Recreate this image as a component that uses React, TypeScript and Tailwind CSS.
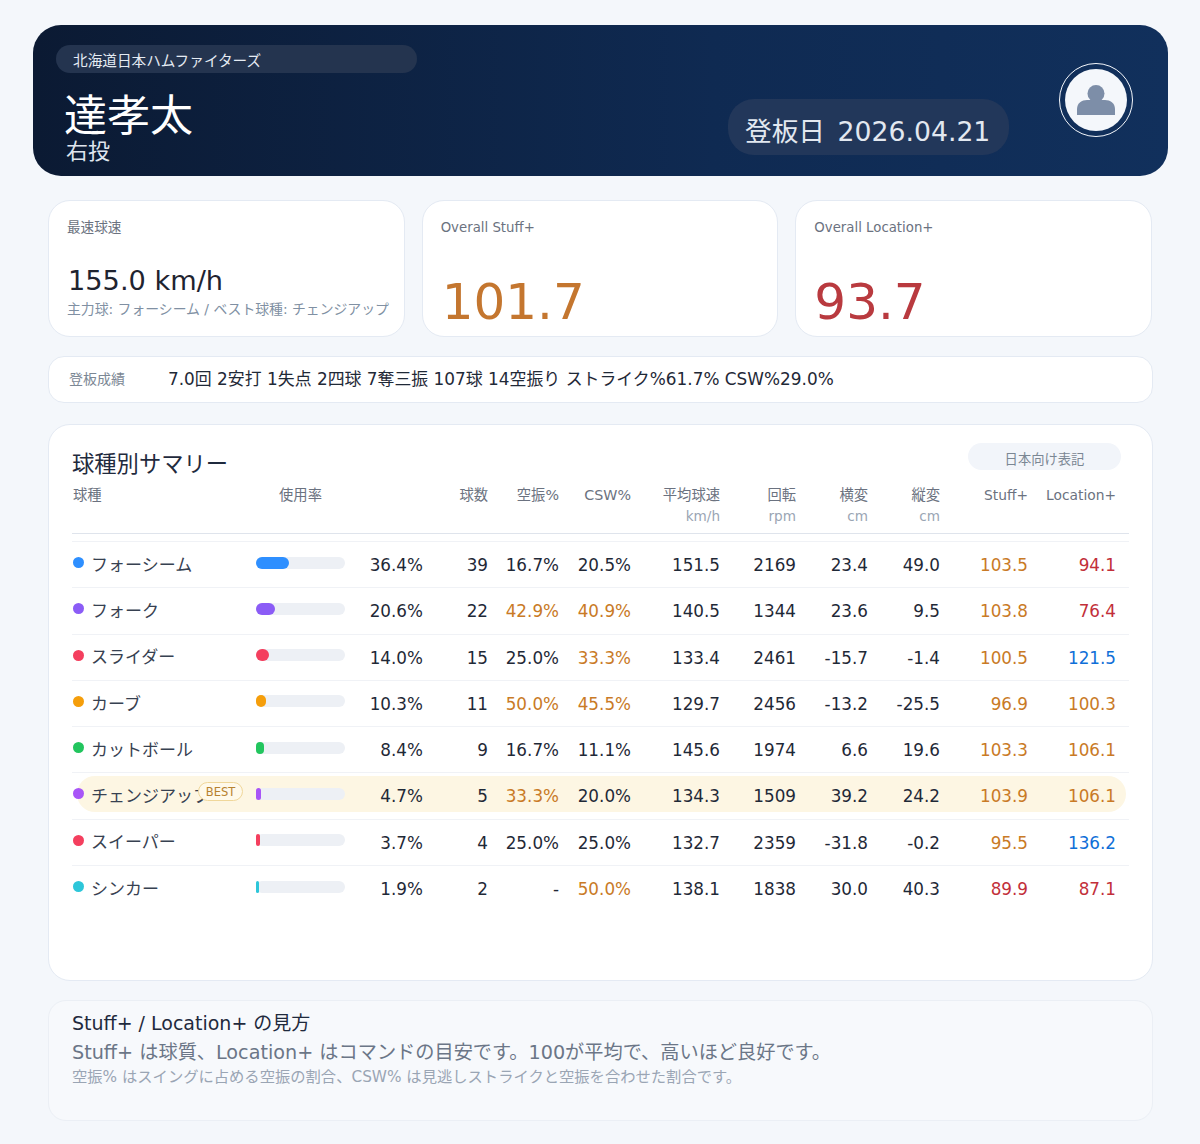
import React from 'react';

type Pitch = {
  name: string;
  color: string;
  usage: number;
  count: number;
  whiff: string;
  csw: string;
  velo: string;
  spin: string;
  h: string;
  v: string;
  stuff: string;
  location: string;
  best?: boolean;
};

const pitches: Pitch[] = [
  { name: 'フォーシーム', color: '#2e8fff', usage: 36.4, count: 39, whiff: '16.7%', csw: '20.5%', velo: '151.5', spin: '2169', h: '23.4', v: '49.0', stuff: '103.5', location: '94.1' },
  { name: 'フォーク', color: '#8b5cf6', usage: 20.6, count: 22, whiff: '42.9%', csw: '40.9%', velo: '140.5', spin: '1344', h: '23.6', v: '9.5', stuff: '103.8', location: '76.4' },
  { name: 'スライダー', color: '#f43f5e', usage: 14.0, count: 15, whiff: '25.0%', csw: '33.3%', velo: '133.4', spin: '2461', h: '-15.7', v: '-1.4', stuff: '100.5', location: '121.5' },
  { name: 'カーブ', color: '#f59e0b', usage: 10.3, count: 11, whiff: '50.0%', csw: '45.5%', velo: '129.7', spin: '2456', h: '-13.2', v: '-25.5', stuff: '96.9', location: '100.3' },
  { name: 'カットボール', color: '#22c55e', usage: 8.4, count: 9, whiff: '16.7%', csw: '11.1%', velo: '145.6', spin: '1974', h: '6.6', v: '19.6', stuff: '103.3', location: '106.1' },
  { name: 'チェンジアップ', color: '#a855f7', usage: 4.7, count: 5, whiff: '33.3%', csw: '20.0%', velo: '134.3', spin: '1509', h: '39.2', v: '24.2', stuff: '103.9', location: '106.1', best: true },
  { name: 'スイーパー', color: '#f43f5e', usage: 3.7, count: 4, whiff: '25.0%', csw: '25.0%', velo: '132.7', spin: '2359', h: '-31.8', v: '-0.2', stuff: '95.5', location: '136.2' },
  { name: 'シンカー', color: '#2dc6d9', usage: 1.9, count: 2, whiff: '-', csw: '50.0%', velo: '138.1', spin: '1838', h: '30.0', v: '40.3', stuff: '89.9', location: '87.1' },
];

const rateColor = (value: string) => {
  const n = parseFloat(value);
  return n >= 30 ? 'text-[#c97a26]' : 'text-[#1f2937]';
};

const plusColor = (value: string) => {
  const n = parseFloat(value);
  if (n >= 110) return 'text-[#0f6fd8]';
  if (n >= 95) return 'text-[#c97a26]';
  return 'text-[#c22f3a]';
};

const rowGrid = 'grid grid-cols-[184px_89px_78px_65px_71px_72px_89px_76px_72px_72px_88px_88px] pr-[13px]';

function HeadCell({ label, unit, small }: { label: string; unit?: string; small?: boolean }) {
  return (
    <div className="text-right">
      <div className={`h-[21px] leading-[21px] ${small ? 'text-[13.8px]' : 'text-[14.3px]'}`}>{label}</div>
      {unit && <div className="text-[#9aa5b4] leading-[21px]">{unit}</div>}
    </div>
  );
}

export default function App() {
  return (
    <div className="h-[1144px] bg-[#f4f7fb] pt-[25px] px-[32px] font-['DejaVu_Sans','Noto_Sans_CJK_JP',sans-serif]">
      {/* ヘッダー */}
      <div className="ml-px flex h-[151px] rounded-[28px] bg-gradient-to-r from-[#0b1a33] via-[#0f2a52] via-60% to-[#11305c] pl-[23px] pt-[20px]">
        <div className="w-[361px] shrink-0">
          <div className="h-[28px] rounded-full bg-[#24344f] pl-[17px] text-[14.65px] leading-[32px] text-[#e5ebf3]">北海道日本ハムファイターズ</div>
          <div className="ml-[8px] mt-[18px] text-[43px] leading-[50px] text-white">達孝太</div>
          <div className="ml-[10px] mt-[-2px] text-[22px] leading-[26px] text-[#dfe5ee]">右投</div>
        </div>
        <div className="ml-[311px] mt-[54px] h-[56px] w-[281px] shrink-0 rounded-[26px] bg-[#22375a] pl-[17px] pt-[15px] text-[26.7px] leading-[36px] text-[#e2e8f0] [word-spacing:4px]">登板日 2026.04.21</div>
        <div className="ml-[50px] mt-[18px] flex h-[74px] w-[74px] shrink-0 items-center justify-center rounded-full border-[1.5px] border-[#f4f7fb]">
          <div className="flex h-[62px] w-[62px] items-center justify-center rounded-full bg-[#f4f7fb]">
            <svg width="38" height="30" viewBox="0 0 38 30" fill="#7d8ea8">
              <circle cx="19" cy="8.5" r="8.5" />
              <path d="M0 30V24C0 18 5 15 10 15H28C33 15 38 18 38 24V30Z" />
            </svg>
          </div>
        </div>
      </div>

      <div className="ml-[16px] mr-[15px]">
        {/* 指標カード */}
        <div className="mr-px mt-[24px] grid h-[137px] grid-cols-3 gap-[17px]">
          <div className="rounded-[22px] border border-[#e4eaf3] bg-white pl-[18px] pt-[17px]">
            <div className="text-[13.6px] leading-[18px] text-[#6b7280]">最速球速</div>
            <div className="ml-px mt-[27px] text-[27.2px] leading-[36px] text-[#1f2430]">155.0 km/h</div>
            <div className="whitespace-nowrap text-[13.85px] leading-[20px] text-[#8090a3]">主力球: フォーシーム / ベスト球種: チェンジアップ</div>
          </div>
          <div className="rounded-[22px] border border-[#e4eaf3] bg-white pl-[18px] pt-[18px]">
            <div className="text-[13.3px] leading-[18px] text-[#6b7280]">Overall Stuff+</div>
            <div className="ml-[1px] mt-[31px] text-[50px] leading-[68px] text-[#c4762f]">101.7</div>
          </div>
          <div className="rounded-[22px] border border-[#e4eaf3] bg-white pl-[18px] pt-[18px]">
            <div className="text-[13.3px] leading-[18px] text-[#6b7280]">Overall Location+</div>
            <div className="mt-[31px] text-[50px] leading-[68px] text-[#b93a3f]">93.7</div>
          </div>
        </div>

        {/* 登板成績 */}
        <div className="mt-[19px] flex h-[47px] items-center rounded-[16px] border border-[#e4eaf3] bg-white pl-[20px]">
          <div className="w-[99px] text-[14px] text-[#7b8794]">登板成績</div>
          <div className="text-[16.9px] text-[#1f2937]">7.0回 2安打 1失点 2四球 7奪三振 107球 14空振り ストライク%61.7% CSW%29.0%</div>
        </div>

        {/* 球種別サマリー */}
        <div className="mt-[21px] h-[557px] rounded-[22px] border border-[#e4eaf3] bg-white pl-[23px] pr-[23px] pt-[18px]">
          <div className="flex justify-between">
            <div className="mt-[5px] text-[22.3px] leading-[32px] text-[#1f2a3d]">球種別サマリー</div>
            <div className="mr-[8px] h-[27px] w-[153px] rounded-full bg-[#f2f5fa] text-center text-[13.3px] leading-[33px] text-[#7b8794]">日本向け表記</div>
          </div>
          <div className={`${rowGrid} mt-[5px] h-[49px] border-b border-[#dfe4ec] text-[13.6px] text-[#6b7280]`}>
            <div className="pl-px text-[14.3px] leading-[21px]">球種</div>
            <div className="text-center text-[14.3px] leading-[21px]">使用率</div>
            <div />
            <HeadCell label="球数" />
            <HeadCell label="空振%" />
            <HeadCell label="CSW%" />
            <HeadCell label="平均球速" unit="km/h" />
            <HeadCell label="回転" unit="rpm" />
            <HeadCell label="横変" unit="cm" />
            <HeadCell label="縦変" unit="cm" />
            <HeadCell label="Stuff+" small />
            <HeadCell label="Location+" small />
          </div>
          <div className="mt-[7px] border-t border-[#f0f2f6]">
            {pitches.map((p) => (
              <div key={p.name} className="relative flex h-[46.25px] items-center border-b border-[#f0f2f6] last:border-b-0">
                {p.best && <div className="absolute left-[5px] right-[3px] top-[3px] h-[36px] rounded-[18px] bg-[#fdf6e3]" />}
                <div className={`${rowGrid} relative h-[34px] w-full items-center pt-[2px] text-[16.8px] text-[#1f2937]`}>
                  <div className="relative flex items-center text-[17px] text-[#374151]">
                    <span className="ml-px mt-[-6px] h-[11px] w-[11px] shrink-0 rounded-full" style={{ backgroundColor: p.color }} />
                    <span className="ml-[7px] whitespace-nowrap">{p.name}</span>
                    {p.best && (
                      <span className="absolute left-[126px] top-[-2px] h-[19px] w-[45px] rounded-full border border-[#f0d79a] bg-[#fff9ea] text-center text-[11.5px] leading-[18px] text-[#b7822f]">BEST</span>
                    )}
                  </div>
                  <div className="mb-[6px] h-[12px] rounded-full bg-[#edf0f5]">
                    <div className="h-full rounded-full" style={{ width: `calc(${p.usage}% + 1px)`, backgroundColor: p.color }} />
                  </div>
                  <div className="text-right">{p.usage.toFixed(1)}%</div>
                  <div className="text-right">{p.count}</div>
                  <div className={`text-right ${rateColor(p.whiff)}`}>{p.whiff}</div>
                  <div className={`text-right ${rateColor(p.csw)}`}>{p.csw}</div>
                  <div className="text-right">{p.velo}</div>
                  <div className="text-right">{p.spin}</div>
                  <div className="text-right">{p.h}</div>
                  <div className="text-right">{p.v}</div>
                  <div className={`text-right ${plusColor(p.stuff)}`}>{p.stuff}</div>
                  <div className={`text-right ${plusColor(p.location)}`}>{p.location}</div>
                </div>
              </div>
            ))}
          </div>
        </div>

        {/* 見方 */}
        <div className="mt-[19px] h-[121px] rounded-[18px] border border-[#ebeff5] bg-[#f7f9fc] pl-[23px] pt-[9px]">
          <div className="text-[19px] leading-[27px] text-[#1f2a3d]">Stuff+ / Location+ の見方</div>
          <div className="mt-[2px] text-[19.2px] leading-[28px] text-[#6b7687]">Stuff+ は球質、Location+ はコマンドの目安です。100が平均で、高いほど良好です。</div>
          <div className="text-[15.3px] leading-[20px] text-[#9aa5b4]">空振% はスイングに占める空振の割合、CSW% は見逃しストライクと空振を合わせた割合です。</div>
        </div>
      </div>
    </div>
  );
}
